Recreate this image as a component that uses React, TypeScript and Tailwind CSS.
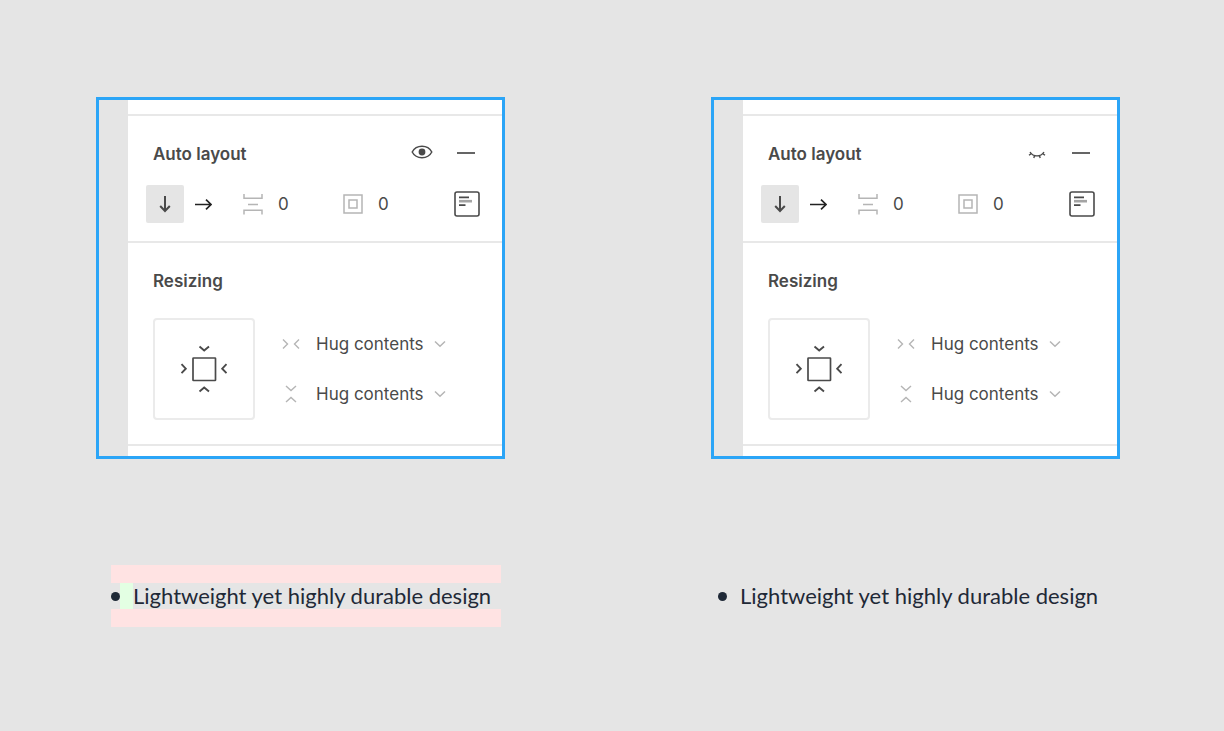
import { useId } from "react";
import type { ReactNode } from "react";
import clsx from "clsx";

type IconProps = { className?: string; children: ReactNode; viewBox: string };

const Icon = ({ className, children, viewBox }: IconProps) => (
  <svg
    viewBox={viewBox}
    className={clsx("block shrink-0", className)}
    fill="none"
    stroke="currentColor"
    strokeWidth="1.7"
    aria-hidden="true"
  >
    {children}
  </svg>
);

const EyeIcon = () => (
  <Icon viewBox="0 0 22 14" className="w-[22px] h-[14px]">
    <path d="M1.2 7C3.2 3.2 6.7 1.3 11 1.3S18.8 3.2 20.8 7C18.8 10.8 15.3 12.7 11 12.7S3.2 10.8 1.2 7Z" strokeWidth="1.5" />
    <circle cx="11" cy="7" r="3.4" fill="currentColor" stroke="none" />
  </Icon>
);

const ClosedEyeIcon = () => (
  <Icon viewBox="0 0 22 14" className="w-[22px] h-[14px]">
    <path
      d="M4 7C5.5 9.4 8 10.9 11 10.9S16.5 9.4 18 7M5.3 8.6L3 10.2M8.6 10.5L7.8 13M13.4 10.5L14.2 13M16.7 8.6L19 10.2"
      strokeWidth="1.4"
    />
  </Icon>
);

const ArrowDownIcon = () => (
  <Icon viewBox="0 0 18 18" className="size-[18px]">
    <path d="M9 1V16M4.2 11L9 16L13.8 11" strokeWidth="2" />
  </Icon>
);

const ArrowRightIcon = () => (
  <Icon viewBox="0 0 18 18" className="size-[18px]">
    <path d="M1 9.500H17M12 4.700L17 9.500L12 14.300" />
  </Icon>
);

const SpacingIcon = () => (
  <Icon viewBox="0 0 20 22" className="w-5 h-[22px]">
    <path d="M1 1V5.200H19V1M5 11.500H15M1 21.500V17.300H19V21.500" strokeWidth="1.5" />
  </Icon>
);

const PaddingIcon = () => (
  <Icon viewBox="0 0 20 20" className="size-5">
    <path d="M1 1H19V19H1ZM6 6H14V14H6Z" strokeWidth="1.5" />
  </Icon>
);

const AlignIcon = () => (
  <Icon viewBox="0 0 26 26" className="size-[26px]">
    <rect x="1" y="1" width="24" height="24" rx="2" strokeWidth="1.6" />
    <path d="M5 6.300H15M5 14.200H11.500" />
    <path d="M5 10.200H18" strokeWidth="2.6" opacity="0.5" />
  </Icon>
);

const HugHorizontalIcon = () => (
  <Icon viewBox="0 0 18 18" className="size-[18px]">
    <path d="M1 4.500L5.500 9L1 13.500M17 4.500L12.500 9L17 13.500" strokeWidth="1.4" />
  </Icon>
);

const HugVerticalIcon = () => (
  <Icon viewBox="0 0 18 18" className="size-[18px]">
    <path d="M4 1L9 5.500L14 1M4 17L9 12.500L14 17" strokeWidth="1.4" />
  </Icon>
);

const ChevronIcon = () => (
  <Icon viewBox="0 0 12 8" className="w-3 h-2">
    <path d="M1 1.500L6 6.200L11 1.500" strokeWidth="1.5" />
  </Icon>
);

const ResizingIcon = () => (
  <Icon viewBox="0 0 50 50" className="size-[50px]">
    <rect x="14" y="14" width="22.5" height="22.5" rx="0.5" />
    <path
      d="M20.500 2.500L25.200 6.500L30 2.500M20.500 47.500L25.200 43.500L30 47.500M2.500 20.200L6.800 24.700L2.500 29.200M47.500 20.200L43.200 24.700L47.500 29.200"
      strokeWidth="1.9"
    />
  </Icon>
);

const NumberField = ({ label, icon }: { label: string; icon: ReactNode }) => {
  const id = useId();
  return (
    <div className="flex items-center w-[100px]">
      <label htmlFor={id} aria-label={label} className="text-[#b5b5b5]">
        {icon}
      </label>
      <input id={id} defaultValue="0" className="ml-[15px] w-10 bg-transparent outline-none" />
    </div>
  );
};

const SizeSelect = ({ label, icon }: { label: string; icon: ReactNode }) => {
  const id = useId();
  return (
    <div className="flex items-center h-[50px] text-[#b5b5b5]">
      <label htmlFor={id} aria-label={label}>
        {icon}
      </label>
      <div className="grid items-center ml-4">
        <select
          id={id}
          className="appearance-none col-start-1 row-start-1 w-[130px] bg-transparent text-[#4a4a4a] outline-none"
        >
          <option>Hug contents</option>
          <option>Fixed</option>
        </select>
        <span className="col-start-1 row-start-1 justify-self-end pointer-events-none">
          <ChevronIcon />
        </span>
      </div>
    </div>
  );
};

const LayoutPanel = ({ visible }: { visible: boolean }) => (
  <section className="border-3 border-[#2ba5f7] pl-[29px]">
    <div className="bg-white text-[#4a4a4a] text-[17px] leading-6 divide-y-2 divide-[#e8e8e8]">
      <div className="h-4" />

      <div className="pt-[26px] pb-[18px] pl-[18px] pr-[22px]">
        <div className="flex items-center pl-[7px] pr-[5px]">
          <h2 className="font-semibold flex-1">Auto layout</h2>
          <div className="flex items-center gap-6 pb-1">
            <button type="button" aria-label={visible ? "Hide padding" : "Show padding"}>
              {visible ? <EyeIcon /> : <ClosedEyeIcon />}
            </button>
            <button type="button" aria-label="Remove auto layout">
              <Icon viewBox="0 0 18 14" className="w-[18px] h-[14px]">
                <path d="M0 8H18" />
              </Icon>
            </button>
          </div>
        </div>
        <div className="flex items-center mt-[19px]">
          <button
            type="button"
            aria-label="Vertical direction"
            className="flex items-center justify-center size-[38px] rounded-xs bg-[#e5e5e5]"
          >
            <ArrowDownIcon />
          </button>
          <button type="button" aria-label="Horizontal direction" className="ml-2.5 mr-[31px] text-[#222]">
            <ArrowRightIcon />
          </button>
          <NumberField label="Spacing between items" icon={<SpacingIcon />} />
          <NumberField label="Padding around items" icon={<PaddingIcon />} />
          <button type="button" aria-label="Alignment" className="ml-auto">
            <AlignIcon />
          </button>
        </div>
      </div>

      <div className="pt-[26px] pb-6 px-[25px]">
        <h2 className="font-semibold">Resizing</h2>
        <div className="flex items-center mt-[25px]">
          <div className="flex items-center justify-center size-[102px] border-2 border-[#ebebeb] rounded-sm">
            <ResizingIcon />
          </div>
          <div className="ml-[27px]">
            <SizeSelect label="Horizontal resizing" icon={<HugHorizontalIcon />} />
            <SizeSelect label="Vertical resizing" icon={<HugVerticalIcon />} />
          </div>
        </div>
      </div>

      <div className="h-2.5" />
    </div>
  </section>
);

const FeatureList = ({ visible }: { visible: boolean }) => (
  <ul
    className={clsx(
      "mt-[106px] border-y-[18px] w-fit text-[#1f2937] text-[22px] leading-[26px]",
      visible ? "ml-[15px] border-[#ffe3e3]" : "ml-[7px] border-transparent"
    )}
  >
    <li className="flex items-center">
      <span className="size-[9px] rounded-full bg-[#1f2937]" />
      <span className={clsx("self-stretch w-[13px]", visible && "bg-[#e3ffe3]")} />
      <span className="pr-2.5">Lightweight yet highly durable design</span>
    </li>
  </ul>
);

const Example = ({ visible }: { visible: boolean }) => (
  <article className="w-1/3 min-w-[409px]">
    <LayoutPanel visible={visible} />
    <div className="font-['Lato',sans-serif]">
      <FeatureList visible={visible} />
    </div>
  </article>
);

const App = () => (
  <main className="min-h-screen bg-[#e5e5e5] font-['Inter',sans-serif] flex items-start justify-between pt-[97px] pl-24 pr-[104px] pb-24">
    <Example visible />
    <Example visible={false} />
  </main>
);

export default App;
